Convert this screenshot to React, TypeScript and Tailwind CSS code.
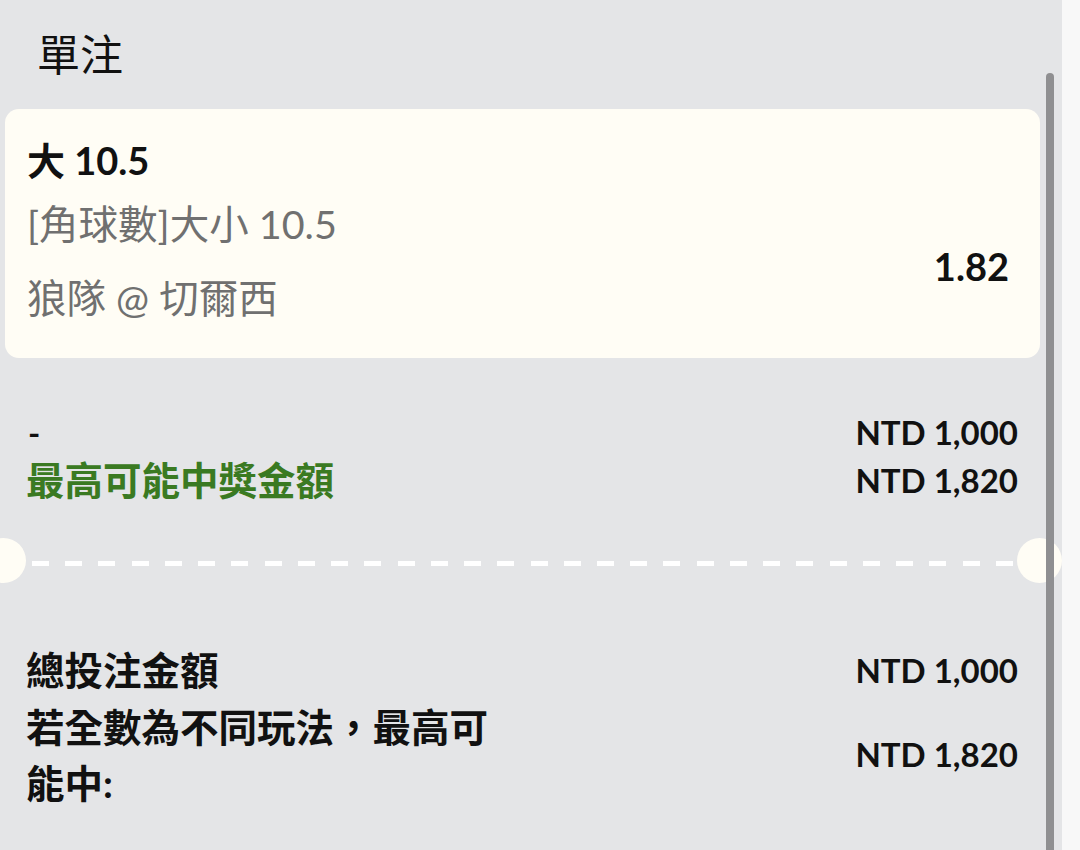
import React from "react";

export default function App() {
  const dashes = Array.from({ length: 30 });
  return (
    <div className="relative flex h-[850px] w-[1080px] overflow-hidden bg-[#e4e5e7] font-['Lato','Noto_Sans_CJK_TC',sans-serif] text-[#111]">
      <div className="relative flex w-[1062px] flex-col">
        {/* header */}
        <div className="flex h-[109px] items-center pl-[37px] text-[43px] leading-[56px]">單注</div>

        {/* selection card */}
        <div className="ml-[5px] flex h-[249px] w-[1035px] justify-between rounded-[14px] bg-[#fffdf5] pl-[22px] pr-[31px]">
          <div className="flex flex-col pt-[19px]">
            <div className="flex h-[64px] items-center text-[38px] font-bold">大 10.5</div>
            <div className="flex h-[64px] items-center text-[39.5px] text-[#707070]">[角球數]大小 10.5</div>
            <div className="mt-[10px] flex h-[64px] items-center text-[39.5px] text-[#707070]">狼隊 @ 切爾西</div>
          </div>
          <div className="mt-[125px] flex h-[64px] items-center text-[38px] font-bold">1.82</div>
        </div>

        {/* stake rows */}
        <div className="mt-[52px] flex flex-col pl-[26px] pr-[44px]">
          <div className="flex h-[46px] items-center justify-between text-[33px] font-bold">
            <span className="pl-[2px]">-</span>
            <span>NTD 1,000</span>
          </div>
          <div className="flex h-[50px] items-center justify-between font-bold">
            <span className="text-[38.5px] text-[#3a7a22]">最高可能中獎金額</span>
            <span className="text-[33px]">NTD 1,820</span>
          </div>
        </div>

        {/* ticket separator */}
        <div className="relative mt-[32px] h-[45px]">
          <div className="absolute -left-[19px] top-0 h-[45px] w-[45px] rounded-full bg-[#fffdf5]" />
          <div className="absolute right-0 top-0 h-[45px] w-[45px] rounded-full bg-[#fffdf5]" />
          <div className="mt-[23px] flex h-[5px] justify-between pl-[32px] pr-[49px]">
            {dashes.map((_, i) => (
              <div key={i} className="h-[5px] w-[17px] bg-white" />
            ))}
          </div>
        </div>

        {/* totals */}
        <div className="mt-[60px] flex flex-col pl-[26px] pr-[44px] font-bold">
          <div className="flex h-[56px] items-center justify-between">
            <span className="text-[38.5px]">總投注金額</span>
            <span className="text-[33px]">NTD 1,000</span>
          </div>
          <div className="flex items-center justify-between">
            <span className="w-[480px] text-[38.5px] leading-[56px]">若全數為不同玩法，最高可能中:</span>
            <span className="text-[33px]">NTD 1,820</span>
          </div>
        </div>

        {/* scrollbar */}
        <div className="absolute left-[1046px] top-[73px] h-[820px] w-[8px] rounded-full bg-[#8f8f91]" />
      </div>
      <div className="w-[18px] bg-[#f8f8f8]" />
    </div>
  );
}
